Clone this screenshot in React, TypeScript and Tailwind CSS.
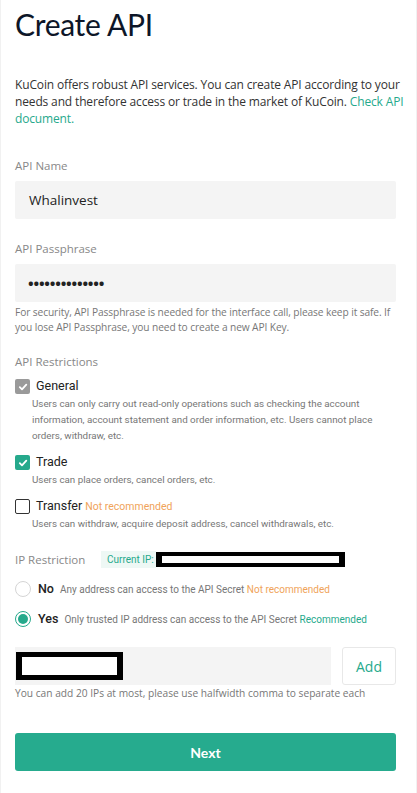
import React from "react";

const green = "text-[#26a98c]";

function Check({ state }: { state: "gray" | "green" | "empty" }) {
  if (state === "empty") {
    return <span className="w-[15px] h-[15px] shrink-0 rounded-[2px] border border-[#333] bg-white" />;
  }
  return (
    <span
      className={`w-[15px] h-[15px] shrink-0 rounded-[2px] flex items-center justify-center ${
        state === "gray" ? "bg-[#9a9a9a]" : "bg-[#26a98c]"
      }`}
    >
      <svg width="10" height="10" viewBox="0 0 10 10" fill="none">
        <path d="M1.8 5.2 L4 7.4 L8.3 2.6" stroke="white" strokeWidth="1.8" strokeLinecap="round" strokeLinejoin="round" />
      </svg>
    </span>
  );
}

function Restriction({
  state,
  title,
  tag,
  lines,
}: {
  state: "gray" | "green" | "empty";
  title: string;
  tag?: string;
  lines: string;
}) {
  return (
    <div>
      <div className="flex items-center gap-[6px] h-[15px]">
        <Check state={state} />
        <span className="text-[12.5px] text-[#222] font-['Roboto',sans-serif]">
          {title}
          {tag && <span className="text-[10.5px] text-[#f0a35a] ml-[3px]">{tag}</span>}
        </span>
      </div>
      <p className="pl-[17px] mt-[2px] text-[9.8px] leading-[16px] text-[#777] font-['Roboto',sans-serif] pr-[16px]">
        {lines}
      </p>
    </div>
  );
}

export default function App() {
  return (
    <div className="w-[417px] min-h-[793px] bg-white border-x border-[#f1f1f1] pl-[14px] pr-[20px] font-['Open_Sans',sans-serif] text-[#222]">
      <h1 className="pt-[4px] text-[30px] tracking-[-0.3px] leading-[40px] text-[#0d1628] font-['Lato',sans-serif]">Create API</h1>

      <p className="mt-[32px] mr-[-10px] text-[12px] tracking-[-0.15px] leading-[17px] text-[#333]">
        KuCoin offers robust API services. You can create API according to your needs and therefore access or trade in the market of KuCoin.{" "}
        <span className={green}>Check API</span> <span className={green}>document.</span>
      </p>

      <div className="mt-[31px] text-[11.5px] text-[#888] leading-[16px]">API Name</div>
      <div className="mt-[7px] h-[38px] bg-[#f4f4f4] rounded-[2px] flex items-center px-[14px] text-[13.5px] text-[#222]">
        Whalinvest
      </div>

      <div className="mt-[22px] text-[11.5px] text-[#888] leading-[16px]">API Passphrase</div>
      <div className="mt-[7px] h-[38px] bg-[#f4f4f4] rounded-[2px] flex items-center px-[13px] text-[15px] font-bold tracking-[-0.2px] text-[#222]">
        ••••••••••••••
      </div>
      <p className="mt-[3px] mr-[-10px] text-[10.2px] tracking-[-0.1px] leading-[15px] text-[#777]">
        For security, API Passphrase is needed for the interface call, please keep it safe. If you lose API Passphrase, you need to create a new API Key.
      </p>

      <div className="mt-[19px] text-[11.5px] text-[#888] leading-[16px]">API Restrictions</div>
      <div className="mt-[9px] flex flex-col gap-[11px]">
        <Restriction
          state="gray"
          title="General"
          lines="Users can only carry out read-only operations such as checking the account information, account statement and order information, etc. Users cannot place orders, withdraw, etc."
        />
        <Restriction state="green" title="Trade" lines="Users can place orders, cancel orders, etc." />
        <Restriction
          state="empty"
          title="Transfer"
          tag="Not recommended"
          lines="Users can withdraw, acquire deposit address, cancel withdrawals, etc."
        />
      </div>

      <div className="mt-[19px] flex items-center h-[17px]">
        <span className="text-[11.5px] text-[#888] w-[86px]">IP Restriction</span>
        <span className="bg-[#eef8f5] text-[#26a98c] text-[10px] h-[17px] flex items-center pl-[6px] pr-[2px] font-['Roboto',sans-serif]">
          Current IP:
        </span>
        <span className="w-[189px] h-[15px] border-x-[6px] border-y-[4px] border-black bg-white" />
      </div>

      <div className="mt-[13px] flex flex-col gap-[14px] font-['Roboto',sans-serif]">
        <div className="flex items-center h-[16px]">
          <span className="w-[16px] h-[16px] rounded-full border border-[#d5d5d5] bg-white shrink-0" />
          <span className="ml-[7px] text-[12.5px] font-medium text-[#222]">No</span>
          <span className="ml-[6px] text-[10px] text-[#777]">
            Any address can access to the API Secret <span className="text-[#f0a35a]">Not recommended</span>
          </span>
        </div>
        <div className="flex items-center h-[16px]">
          <span className="w-[16px] h-[16px] rounded-full border border-[#26a98c] bg-white shrink-0 flex items-center justify-center">
            <span className="w-[10px] h-[10px] rounded-full bg-[#26a98c]" />
          </span>
          <span className="ml-[7px] text-[12.5px] font-medium text-[#222]">Yes</span>
          <span className="ml-[6px] text-[10px] text-[#777]">
            Only trusted IP address can access to the API Secret <span className="text-[#26a98c]">Recommended</span>
          </span>
        </div>
      </div>

      <div className="mt-[20px] flex gap-[11px] h-[38px]">
        <div className="flex-1 bg-[#f4f4f4] flex items-center pl-[1px]">
          <span className="w-[107px] h-[28px] border-x-[6px] border-y-[5px] border-black bg-white" />
        </div>
        <button className="w-[54px] border border-[#e8e8e8] rounded-[3px] bg-white text-[14px] text-[#26a98c]">
          Add
        </button>
      </div>
      <p className="mt-[1px] text-[10.2px] leading-[15px] text-[#777]">
        You can add 20 IPs at most, please use halfwidth comma to separate each
      </p>

      <button className="mt-[32px] w-full h-[38px] rounded-[3px] bg-[#26ab8e] text-white text-[14px] font-bold font-['Lato',sans-serif]">
        Next
      </button>
    </div>
  );
}
